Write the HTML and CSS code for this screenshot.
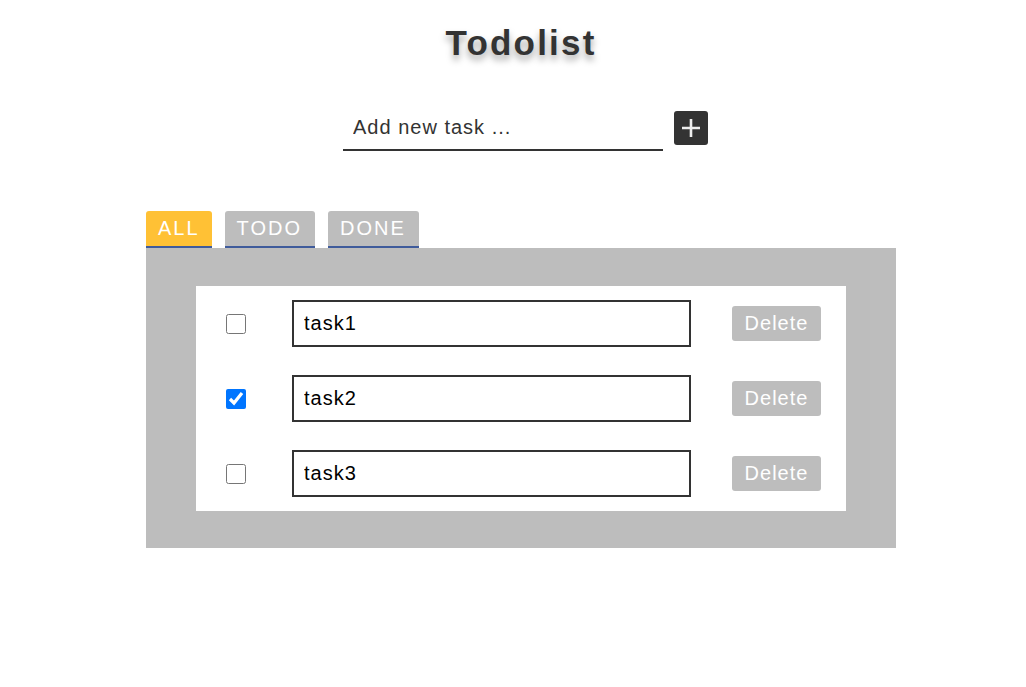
FILE: index.html
```html
<!DOCTYPE html>
<html lang="en">
<head>
<meta charset="utf-8">
<title>Todolist</title>
<link rel="stylesheet" href="styles.css">
</head>
<body>
<div class="app">
  <h1 class="title">Todolist</h1>
  <form class="add-row" onsubmit="return false">
    <input class="add-input" type="text" placeholder="Add new task ...">
    <button class="add-btn" type="button" aria-label="Add">
      <svg width="20" height="20" viewBox="0 0 20 20"><path d="M10 1V19M1 10H19" stroke="#eeeeee" stroke-width="2.6" fill="none"/></svg>
    </button>
  </form>
  <div class="tabs">
    <div class="tab active">ALL</div>
    <div class="tab">TODO</div>
    <div class="tab">DONE</div>
  </div>
  <div class="panel">
    <div class="list">
      <div class="row">
        <input class="check" type="checkbox">
        <input class="task" type="text" value="task1">
        <button class="del" type="button">Delete</button>
      </div>
      <div class="row">
        <input class="check" type="checkbox" checked>
        <input class="task" type="text" value="task2">
        <button class="del" type="button">Delete</button>
      </div>
      <div class="row">
        <input class="check" type="checkbox">
        <input class="task" type="text" value="task3">
        <button class="del" type="button">Delete</button>
      </div>
    </div>
  </div>
</div>
</body>
</html>
```

FILE: styles.css
```css
* { box-sizing: border-box; }
html, body { margin: 0; background: #fff; }
body {
  padding-left: 16px;
  font-family: "Liberation Sans", Arial, sans-serif;
  color: #333;
}
.app {
  width: 750px;
  margin: 0 auto;
}
.title {
  margin: 23px 0 0;
  text-align: center;
  font-size: 35px;
  line-height: 40px;
  font-weight: bold;
  letter-spacing: 2.2px;
  color: #333;
  text-shadow: 0 5px 7px rgba(0,0,0,0.35);
}
.add-row {
  margin: 48px 0 0;
  display: flex;
  justify-content: center;
  align-items: flex-start;
  padding-left: 9px;
  gap: 11px;
}
.add-input {
  width: 320px;
  height: 40px;
  padding: 5px 10px 10px;
  border: none;
  border-bottom: 2px solid #333;
  outline: none;
  font-family: inherit;
  font-size: 20px;
  line-height: 23px;
  letter-spacing: 1px;
  color: #333;
  background: transparent;
}
.add-input::placeholder { color: #333; opacity: 1; }
.add-btn {
  width: 34px;
  height: 34px;
  padding: 0;
  border: none;
  border-radius: 3px;
  background: #333;
  display: flex;
  align-items: center;
  justify-content: center;
}
.tabs {
  margin-top: 60px;
  display: flex;
  gap: 13px;
}
.tab {
  padding: 6px 13px 6px 12px;
  font-size: 20px;
  line-height: 23px;
  letter-spacing: 2px;
  color: #fff;
  background: #bdbdbd;
  border-radius: 3px 3px 0 0;
  border-bottom: 2px solid #3f5b9b;
}
.tab.active { background: #ffc135; padding-right: 12px; }
.panel {
  background: #bdbdbd;
  padding: 38px 50px 37px;
}
.list { background: #fff; }
.row {
  height: 75px;
  display: flex;
  align-items: center;
  padding-left: 30px;
}
.check {
  width: 20px;
  height: 20px;
  margin: 0;
}
.task {
  margin-left: 46px;
  width: 399px;
  height: 47px;
  border: 2px solid #333;
  padding: 0 10px;
  font-family: inherit;
  font-size: 20px;
  letter-spacing: 1px;
  color: #000;
  outline: none;
}
.del {
  margin-left: 41px;
  width: 89px;
  height: 35px;
  border: none;
  border-radius: 3px;
  background: #bdbdbd;
  color: #fff;
  font-family: inherit;
  font-size: 20px;
  letter-spacing: 1px;
  padding: 0;
}
```
